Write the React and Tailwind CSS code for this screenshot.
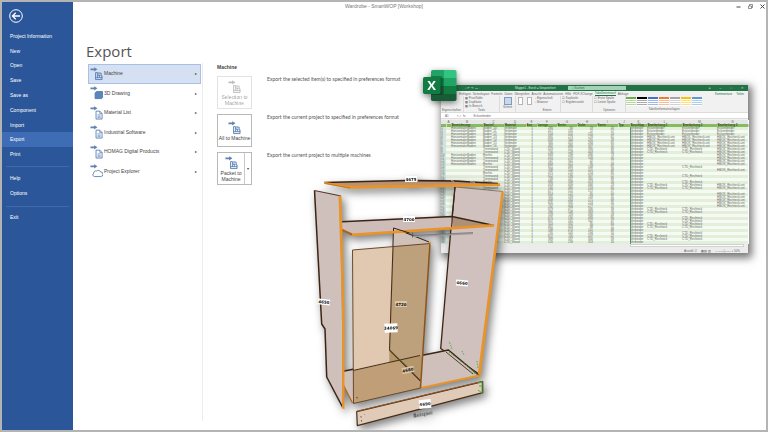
import React, { useState } from "react";
import clsx from "clsx";

const MENU = [
  "Project Information",
  "New",
  "Open",
  "Save",
  "Save as",
  "Component",
  "Import",
  "Export",
  "Print",
];

const CATEGORIES = [
  { name: "Machine", icon: "machine" },
  { name: "3D Drawing", icon: "cube" },
  { name: "Material List", icon: "doc" },
  { name: "Industrial Software", icon: "doc" },
  { name: "HOMAG Digital Products", icon: "doc" },
  { name: "Project Explorer", icon: "cloud" },
];

// Export glyph: arrow in the top left corner, target below it
function ExportIcon({ kind, className }) {
  return (
    <svg viewBox="0 0 14 15" className={className} fill="none" stroke="#4a76b0" strokeWidth="0.9" aria-hidden="true">
      <path d="M0.5 1.6h4V0.2L8 2.5 4.5 4.8V3.4h-4z" fill="#5f83ad" stroke="none" />
      {kind === "machine" && (
        <>
          <path d="M6 6v7.5h7V9.5h-1V6.5H9.5M6 6h2v3M8 11.5v-2M10 11.5v-3M12 11.5v-1M6 11.5h7" />
          <path d="M9.5 5.5v3M7.5 9h4" strokeWidth="0.7" />
        </>
      )}
      {kind === "cube" && <path d="M5.5 7.5L7 6h6.5v6.5L12.5 13.5h-7z" fill="#5b86bd" />}
      {kind === "doc" && (
        <>
          <path d="M6.5 5.5h4l2.5 2.5v6H6.5z" fill="#fff" />
          <path d="M10.5 5.5v2.5h2.5M8 9.5h3.5M8 11h3.5M8 12.5h3.5" strokeWidth="0.7" />
        </>
      )}
      {kind === "cloud" && (
        <path d="M5 13.5a2 2 0 0 1-1-3.7 2.2 2.2 0 0 1 3-2.3 3 3 0 0 1 4.5 1 2.4 2.4 0 0 1 0 5z" fill="#fff" />
      )}
    </svg>
  );
}

function Sidebar({ active, onSelect }) {
  const item = "w-full pl-2 text-left text-white";
  return (
    <aside className="w-[71px] shrink-0 bg-[#2b579a] text-[5px]">
      <button aria-label="Back" className="mt-[7px] ml-[7px] block">
        <svg viewBox="0 0 14 14" className="size-[14px]" fill="none" stroke="#fff">
          <circle cx="7" cy="7" r="6.3" strokeWidth="1" />
          <path d="M11 7H3.5M6.7 3.8L3.5 7l3.2 3.2" strokeWidth="1.3" />
        </svg>
      </button>
      <nav className="mt-[6px] flex h-[133px] flex-col">
        {MENU.map((name) => (
          <button
            key={name}
            onClick={() => onSelect(name)}
            className={clsx(item, "flex-1", active === name && "bg-[#3e6db5]")}
          >
            {name}
          </button>
        ))}
      </nav>
      <hr className="mx-1 mt-1 border-[#416aa8]" />
      <div className="flex flex-col pt-1 pb-[5px]">
        <button className={clsx(item, "h-[15px]")}>Help</button>
        <button className={clsx(item, "h-[15px]")}>Options</button>
      </div>
      <hr className="mx-1 border-[#416aa8]" />
      <button className={clsx(item, "mt-[3px] h-[15px]")}>Exit</button>
    </aside>
  );
}

/* ---------- Spreadsheet window ---------- */

const COLS = ["", "A", "B", "C", "D", "E", "F", "G", "H", "I", "J", "K", "L", "M", "N"];
const HEADS = ["", "", "Bezeichnung", "Bauteil", "Material", "Anz", "Laenge", "Breite", "Dicke", "Kante", "Typ", "Beschlag", "Bearbeitung 1", "Bearbeitung 2", "Bearbeitung 3"];

const HBOX = "HBOX_Rechteck.unt";
const CTD = "CTD_Rechteck";
const L_ROWS = [7, 8, 19, 20, 27, 28, 32, 33, 36, 37];
const M_ROWS = [7, 8, 13, 16, 18, 19, 20, 27, 28, 30, 31, 32, 33, 35, 36, 37];
const N_ROWS = [7, 8, 9, 10, 11, 12, 14, 19, 20, 22, 23, 24, 25, 26];

function machining(i, rows, text) {
  if (i < 3) return "Eckverbinder";
  if (i < 7) return HBOX;
  return rows.includes(i) ? text : "";
}

const ROWS = Array.from({ length: 39 }, (_, i) => [
  i + 1,
  "",
  i < 7 || (i > 8 && i < 13) ? "HorizontalerBoden" : "",
  i < 7 ? "Boden_" + (i + 10) : i % 3 ? "Trennwand" : "Rechts",
  i < 7 ? "Verbinder" : "CTD_Wand",
  1,
  280 + ((i * 137) % 620),
  60 + ((i * 71) % 500),
  19 + ((i * 53) % 560),
  20 + ((i * 37) % 70),
  "",
  "Verbinder",
  machining(i, L_ROWS, CTD),
  machining(i, M_ROWS, CTD),
  machining(i, N_ROWS, HBOX),
]);

const TABS = ["Einfügen", "Seitenlayout", "Formeln", "Daten", "Überprüfen", "Ansicht", "Automatisieren", "Hilfe", "PDF-XChange"];

function Swatch({ className }) {
  return (
    <button aria-label="Table style" className={clsx("flex h-[9px] w-[10px] flex-col gap-px border-t-2 bg-white pt-px", className)}>
      <span className="h-px w-full bg-current opacity-50" />
      <span className="h-px w-full bg-current opacity-50" />
      <span className="h-px w-full bg-current opacity-50" />
    </button>
  );
}

function RibbonGroup({ lines, label, className }) {
  return (
    <div className={clsx("flex flex-col border-r border-[#dcdcdc] px-px", className)}>
      {lines.map((l) => (
        <span key={l}>{l}</span>
      ))}
      <span className="mt-auto text-center">{label}</span>
    </div>
  );
}

function Spreadsheet() {
  return (
    <section className="absolute top-[83px] left-[368px] w-[307px] bg-[#f1f1f1] text-[3px] leading-[4px] text-[#666] shadow-[2px_3px_8px_2px_rgba(0,0,0,0.55)]">
      <header className="flex h-[6px] items-center bg-[#217346] pl-6 text-white/80">
        <span className="w-[50px]">▫ ↶ ↷ ⋯</span>
        <span>Mappe1 - Excel  ● Gespeichert</span>
        <span className="ml-3 h-1 w-[58px] bg-[#9fd5b5] pl-1 text-[#217346]">⌕ Suchen</span>
        <span className="ml-auto flex gap-[9px] pr-1">
          <span>●</span>
          <span>–</span>
          <span>□</span>
          <span>✕</span>
        </span>
      </header>
      <nav className="flex h-[5px] items-center gap-[2px] pl-[18px] whitespace-nowrap">
        {TABS.map((t) => (
          <a key={t} href="#ribbon">{t}</a>
        ))}
        <a href="#ribbon" className="border-b border-[#217346] text-[#217346]">Tabellenentwurf</a>
        <a href="#ribbon">Abfrage</a>
        <span className="ml-auto flex gap-1 pr-1 text-[#217346]">
          <span>Kommentare</span>
          <span>Teilen</span>
        </span>
      </nav>
      <div id="ribbon" className="flex h-4 whitespace-nowrap">
        <div className="flex w-[23px] flex-col justify-end border-r border-[#dcdcdc] pl-px">
          <span>Eigenschaften</span>
        </div>
        <RibbonGroup className="w-9" lines={["▦ PivotTable", "▦ Duplikate", "▦ In Bereich"]} label="Tools" />
        <div className="flex w-4 flex-col items-center border-r border-[#dcdcdc]">
          <span className="mt-px size-2 border border-[#7c9cc4] bg-[#c9d8ea]" />
          <span>Schnitt</span>
        </div>
        <div className="flex w-[18px] justify-center gap-1 pt-px">
          <span className="h-2 w-[5px] border border-[#b5b5b5] bg-white" />
          <span className="h-2 w-[5px] border border-[#b5b5b5] bg-white" />
        </div>
        <RibbonGroup className="w-[27px]" lines={["▫ Eigenschaft", "▫ Browser"]} label="Extern" />
        <RibbonGroup className="w-8" lines={["☑ Kopfzeile", "☐ Ergebniszeile"]} label="" />
        <RibbonGroup className="w-[33px]" lines={["☐ Erste Spalte", "☐ Letzte Spalte"]} label="Optionen" />
        <div className="flex flex-col items-center">
          <div className="mt-px flex gap-px">
            <Swatch className="border-[#70ad47] text-[#70ad47]" />
            <Swatch className="border-black text-[#555]" />
            <Swatch className="border-[#4472c4] text-[#4472c4]" />
            <Swatch className="border-[#ed7d31] text-[#ed7d31]" />
            <Swatch className="border-[#a5a5a5] text-[#a5a5a5]" />
            <Swatch className="border-[#ffc000] text-[#ffc000]" />
            <Swatch className="border-[#5b9bd5] text-[#5b9bd5]" />
          </div>
          <span className="mt-px">Tabellenformatvorlagen</span>
        </div>
      </div>
      <div className="flex h-[7px] items-center gap-2 border-y border-[#dcdcdc] bg-white pl-1">
        <span>A1</span>
        <span>× ✓ fx</span>
        <span>Eckverbinder</span>
      </div>
      <table className="mt-px w-full table-fixed border-collapse bg-white text-[3px] leading-[3px] whitespace-nowrap">
        <colgroup>
          <col className="w-[5px]" />
          <col className="w-[5px]" />
          <col className="w-8" />
          <col className="w-[21px]" />
          <col className="w-[22px]" />
          <col className="w-[11px]" />
          <col className="w-5" />
          <col className="w-5" />
          <col className="w-5" />
          <col className="w-[21px]" />
          <col className="w-3" />
          <col className="w-[17px]" />
          <col className="w-[35px]" />
          <col className="w-[35px]" />
          <col className="w-[31px]" />
        </colgroup>
        <thead>
          <tr className="bg-[#e6e6e6]">
            {COLS.map((c) => (
              <th key={c} className="h-1 p-0 font-normal">{c}</th>
            ))}
          </tr>
          <tr className="bg-[#86bb5f] text-[#33511f]">
            {HEADS.map((h, i) => (
              <th key={i} className="h-[3px] border-r border-[#c5deb3] p-0 text-left">{h}</th>
            ))}
          </tr>
        </thead>
        <tbody>
          {ROWS.map((row, i) => (
            <tr key={i} className="odd:bg-[#e2efda] even:bg-[#f6faf3]">
              {row.map((v, c) => (
                <td
                  key={c}
                  className={clsx(
                    "h-[3px] p-0",
                    c === 0 && "bg-[#d3e3dc]",
                    c > 4 && c < 10 && "pr-1 text-right",
                    c === 11 && "border-l border-[#5a9a76]"
                  )}
                >
                  {v}
                </td>
              ))}
            </tr>
          ))}
        </tbody>
      </table>
      <footer className="flex h-[9px] flex-col justify-between bg-[#ececec]">
        <span className="ml-[189px] h-[3px] w-[114px] border border-[#d0d0d0] bg-white" />
        <span className="flex justify-end gap-1 pr-2">
          <span>Anzahl: 2</span>
          <span>▦ ▤ ▥</span>
          <span>– ——|—— + 50%</span>
        </span>
      </footer>
    </section>
  );
}

function ExcelLogo() {
  return (
    <svg viewBox="0 0 34 32" className="absolute top-[68px] left-[350px] h-8 w-[34px] drop-shadow-[0_2px_3px_rgba(0,0,0,0.5)]" role="img" aria-label="Excel">
      <clipPath id="book">
        <rect x="8" width="25.5" height="31" rx="1.7" />
      </clipPath>
      <g clipPath="url(#book)">
        <path d="M8 0h13v8H8z" fill="#21a366" />
        <path d="M21 0h13v8H21z" fill="#33c481" />
        <path d="M8 8h13v8H8z" fill="#107c41" />
        <path d="M21 8h13v8H21z" fill="#21a366" />
        <path d="M8 16h13v8H8z" fill="#185c37" />
        <path d="M21 16h13v8H21z" fill="#107c41" />
        <path d="M8 24h26v8H8z" fill="#185c37" />
        <path d="M8 6h10a1.5 1.5 0 0 1 1.5 1.5V25H8z" fill="#000" opacity="0.25" />
      </g>
      <rect y="7" width="17.5" height="17" rx="1.7" fill="#107c41" />
      <text x="8.7" y="20" textAnchor="middle" fontSize="13" fontWeight="700" fill="#fff" fontFamily="Open Sans, sans-serif">X</text>
    </svg>
  );
}

/* ---------- Wardrobe drawing ---------- */

const LABELS = [
  { t: "4675", x: 411, y: 179, r: 0 },
  { t: "4700", x: 409, y: 219, r: 0 },
  { t: "4650", x: 324, y: 302, r: 6 },
  { t: "4660", x: 462, y: 283, r: 4 },
  { t: "4720", x: 401, y: 304, r: 0, soft: true },
  { t: "34069", x: 391, y: 328, r: -3 },
  { t: "4680", x: 408, y: 370, r: -12, soft: true },
  { t: "4690", x: 425, y: 404, r: -6 },
];

function Wardrobe() {
  return (
    <svg
      viewBox="300 160 220 270"
      className="absolute top-[158px] left-[227px] h-[270px] w-[220px] drop-shadow-[3px_4px_4px_rgba(0,0,0,0.5)]"
      role="img"
      aria-label="Exploded wardrobe"
      strokeLinejoin="round"
      fill="none"
    >
      {/* right side */}
      <path d="M455 187L503 191.500 479 376 440.700 348.500 451 228z" fill="#d0c1be" />
      <path d="M455 187L451 228 440.700 348.500 479 374" stroke="#3b2414" strokeWidth="1.3" />
      <path d="M455 187l48 4.500" stroke="#5b3a20" strokeWidth="0.5" />
      <path d="M501.500 191.500h2.400L480.500 377l-3-1z" fill="#e8942a" />

      {/* bottom */}
      <path d="M337 372.500L448.500 350 479 375.500 421 388 352.500 403z" fill="#d0c0bb" />
      <path d="M352.500 403L337 372.500" stroke="#b06a20" strokeWidth="1.3" />
      <path d="M337 372.500L448.500 350 479 375.500" stroke="#3b2414" strokeWidth="1.4" />
      <path d="M421 388l58-12.500" stroke="#e8942a" strokeWidth="2" />
      <path d="M446 352l27 22" stroke="#4a2d18" strokeWidth="0.9" />

      {/* divider */}
      <path d="M393.500 228L429 242l-9 138-30.500-30z" fill="#cfc0b8" />
      <path d="M429 242l-35.500-14-4 122 30 31" stroke="#3b2414" strokeWidth="1" />

      {/* hanging rail */}
      <path d="M413 236.500l60-3" stroke="#999b9f" strokeWidth="1.7" />
      <path d="M413 235.500l60-3" stroke="#5e5e60" strokeWidth="0.6" />
      <path d="M412.500 232.500v5" stroke="#555" strokeWidth="0.8" />

      {/* door */}
      <path d="M352.500 250L430 243.500 420.500 388 353.500 403.500z" fill="#e0c9b0" />
      <path d="M393 246.500l37-3-9.200 136.500L389.500 350z" fill="#bda07c" />
      <path d="M353 370.500l36.500-7.500v-13l31.500 30-.5 8-67 15.500z" fill="#bf9e78" />
      <path d="M389.500 363l25-5.500 7-1.500-.5 24.500-31.500-30z" fill="#b5956a" />
      <path d="M353 370.500l67-15M393 246.500l-3.500 103.500 31 31" stroke="#4a3018" strokeWidth="1.1" />
      <path d="M389.500 350l25 23" stroke="#4d7a2c" strokeWidth="0.5" />
      <path d="M430 243.500l-77.500 6.500 1 153.500 67-15.500" stroke="#5f3c1c" strokeWidth="0.9" />
      <path d="M430 243l-9.500 145" stroke="#8e5319" strokeWidth="1.5" />
      <path d="M429 242.500l2-1v4z" fill="#e8942a" />

      {/* middle shelf */}
      <path d="M326 222.500L452 216.500 494 225.500 352 234.500z" fill="#cdbcb8" />
      <path d="M451 217l43 8.500-41 2z" fill="#ad9078" />
      <path d="M326 222.500L452 216.500 494 225.500" stroke="#3b2414" strokeWidth="1.6" />
      <path d="M455 187L451.500 227" stroke="#3b2414" strokeWidth="1" />
      <path d="M326 222.500l26 12" stroke="#a8641c" strokeWidth="2" />
      <path d="M352 233.500l142-9.500v2.700L352 236.200z" fill="#e8942a" />
      <path d="M393.500 231v-3l16 5" stroke="#3b2414" strokeWidth="1" />

      {/* top */}
      <path d="M324 182.500L385 181l70-1 46 4-151 3z" fill="#b89271" />
      <path d="M324 182.500l81-2M418 180.700l36 .3 44 2.500" stroke="#3b2414" strokeWidth="1.7" />
      <path d="M324 181.800l26 4 150-2.300v2.500L350 188.700l-26-5z" fill="#e8942a" />
      <path d="M325 183.500l25 4.500" stroke="#a8641c" strokeWidth="0.6" />
      <path d="M451 180.500l3 .8M470 181.800l5 .5" stroke="#e9dcd0" strokeWidth="0.7" />

      {/* left side */}
      <path d="M314.500 190.500L340 196l3.300 212-16.600-31-1.700-48-3.300-5z" fill="#cfc0bc" />
      <path d="M341 196l-26.500-5.500" stroke="#3b2414" strokeWidth="0.9" />
      <path d="M314.500 190.500l7.200 133.500 3.300 5 1.700 48 16.300 31" stroke="#3b2414" strokeWidth="1.5" />
      <path d="M338.500 195.500l3 .8 3 112.700v100.500l-2.500-1.500V309z" fill="#e8942a" />

      {/* plinth */}
      <path d="M356.700 411.700l126-30v11l-125.400 33z" fill="#e0cab8" stroke="#4a2d18" strokeWidth="1.2" />
      <path d="M356.700 411.300l126-30" stroke="#94541c" strokeWidth="1" />
      <path d="M361 416v1.500M361.500 420v1.500M364 414l.5.5M356 397.500l2 .5" stroke="#555" strokeWidth="0.9" />

      {/* drillings */}
      <g stroke="#3fae3a" strokeWidth="0.9" strokeDasharray="1.5 1.2">
        <path d="M449 352l27 21M452 349l-3-8M462 351l2 4M477 361l1 8M471 372l8 3" />
        <path d="M478 383l4-1v11l-4-3M479 386h3" strokeDasharray="none" />
      </g>

      {LABELS.map((l) => (
        <g key={l.t} transform={`rotate(${l.r} ${l.x} ${l.y})`}>
          <rect
            x={l.x - (l.t.length > 4 ? 6.5 : 6)}
            y={l.y - (l.t === "34069" || l.t === "4690" ? 4.5 : 3)}
            width={l.t.length > 4 ? 13 : 12}
            height={l.t === "34069" || l.t === "4690" ? 9 : 6}
            fill={l.soft ? "#dcc6a6" : "#fff"}
          />
          <text x={l.x} y={l.y + 1.5} textAnchor="middle" fontSize="4" fontWeight="700" fill="#111" fontFamily="DejaVu Sans, sans-serif">
            {l.t}
          </text>
        </g>
      ))}
      <text x="423" y="416" transform="rotate(-10 423 414)" textAnchor="middle" fontSize="5" fill="#222" fontFamily="DejaVu Sans, sans-serif">
        Beispiel
      </text>
    </svg>
  );
}

/* ---------- Page ---------- */

function Action({ label, text, disabled, split }) {
  return (
    <div className="flex items-start gap-[15px]">
      <div className={clsx("flex h-[33px] w-[35px] shrink-0 border bg-white", disabled ? "border-[#e2e2e2]" : "border-[#b9b9b9]")}>
        <button disabled={disabled} className={clsx("flex flex-1 flex-col items-center justify-center leading-[6px]", disabled && "opacity-50 grayscale")}>
          <ExportIcon kind="machine" className="h-[14px] w-[13px]" />
          {label.map((l) => (
            <span key={l} className="whitespace-nowrap">{l}</span>
          ))}
        </button>
        {split && (
          <button aria-label="More options" className="w-[7px] border-l border-[#c9c9c9] text-[4px]">▾</button>
        )}
      </div>
      <p className="font-['Lato',sans-serif] leading-[7px] text-[#555]">{text}</p>
    </div>
  );
}

export default function App() {
  const [page, setPage] = useState("Export");
  const [category, setCategory] = useState("Machine");

  return (
    <div className="flex min-h-screen border-2 border-[#b4b4b4] bg-white font-['Liberation_Sans',sans-serif] text-[5px] leading-[7px] text-[#444]">
      <Sidebar active={page} onSelect={setPage} />

      <main className="relative flex-1 overflow-hidden">
        <header className="flex h-2 items-center">
          <h2 className="flex-1 text-center text-[#777]">Wardrobe - SmartWOP [Workshop]</h2>
          <div className="flex w-[71px] items-center justify-end gap-[7px] pr-px">
            <button aria-label="Minimize">
              <svg viewBox="0 0 5 5" className="size-[5px]" stroke="#444"><path d="M0.5 3h4" /></svg>
            </button>
            <button aria-label="Restore">
              <svg viewBox="0 0 5 5" className="size-[5px]" fill="none" stroke="#666" strokeWidth="0.7">
                <path d="M0.5 2h3v2.5h-3zM1.5 2V0.5h3V3.5h-1" />
              </svg>
            </button>
            <button aria-label="Close">
              <svg viewBox="0 0 5 5" className="size-[5px]" stroke="#444"><path d="M0.5 0.5l4 4M4.5 0.5l-4 4" /></svg>
            </button>
          </div>
        </header>

        <h1 className="mt-[29px] ml-[13px] text-[15px] leading-6 text-[#555] font-['Open_Sans',sans-serif]">Export</h1>

        <div className="flex">
          <div className="w-[130px] shrink-0 border-r border-[#ececec] pr-px pl-[15px]">
            <div className="mt-px flex h-[117px] flex-col">
              {CATEGORIES.map((c) => (
                <button
                  key={c.name}
                  onClick={() => setCategory(c.name)}
                  className={clsx(
                    "flex flex-1 items-center border text-left",
                    category === c.name ? "border-[#a9c0e4] bg-[#d5e1f2]" : "border-transparent"
                  )}
                >
                  <ExportIcon kind={c.icon} className="ml-px h-[14px] w-[13px]" />
                  <span className="ml-px flex-1">{c.name}</span>
                  <span className="mr-[3px] text-[4px]">▸</span>
                </button>
              ))}
            </div>
            <div className="h-[240px]" />
          </div>

          <section className="pt-px pl-[14px]">
            <h3 className="mb-[5px] font-bold">Machine</h3>
            <div className="flex flex-col gap-[5px]">
              <Action disabled label={["Selection to", "Machine"]} text="Export the selected item(s) to specified in preferences format" />
              <Action label={["All to Machine"]} text="Export the current project to specified in preferences format" />
              <Action split label={["Packet to", "Machine"]} text="Export the current project to multiple machines" />
            </div>
          </section>
        </div>

        <Spreadsheet />
        <ExcelLogo />
        <Wardrobe />
      </main>
    </div>
  );
}
